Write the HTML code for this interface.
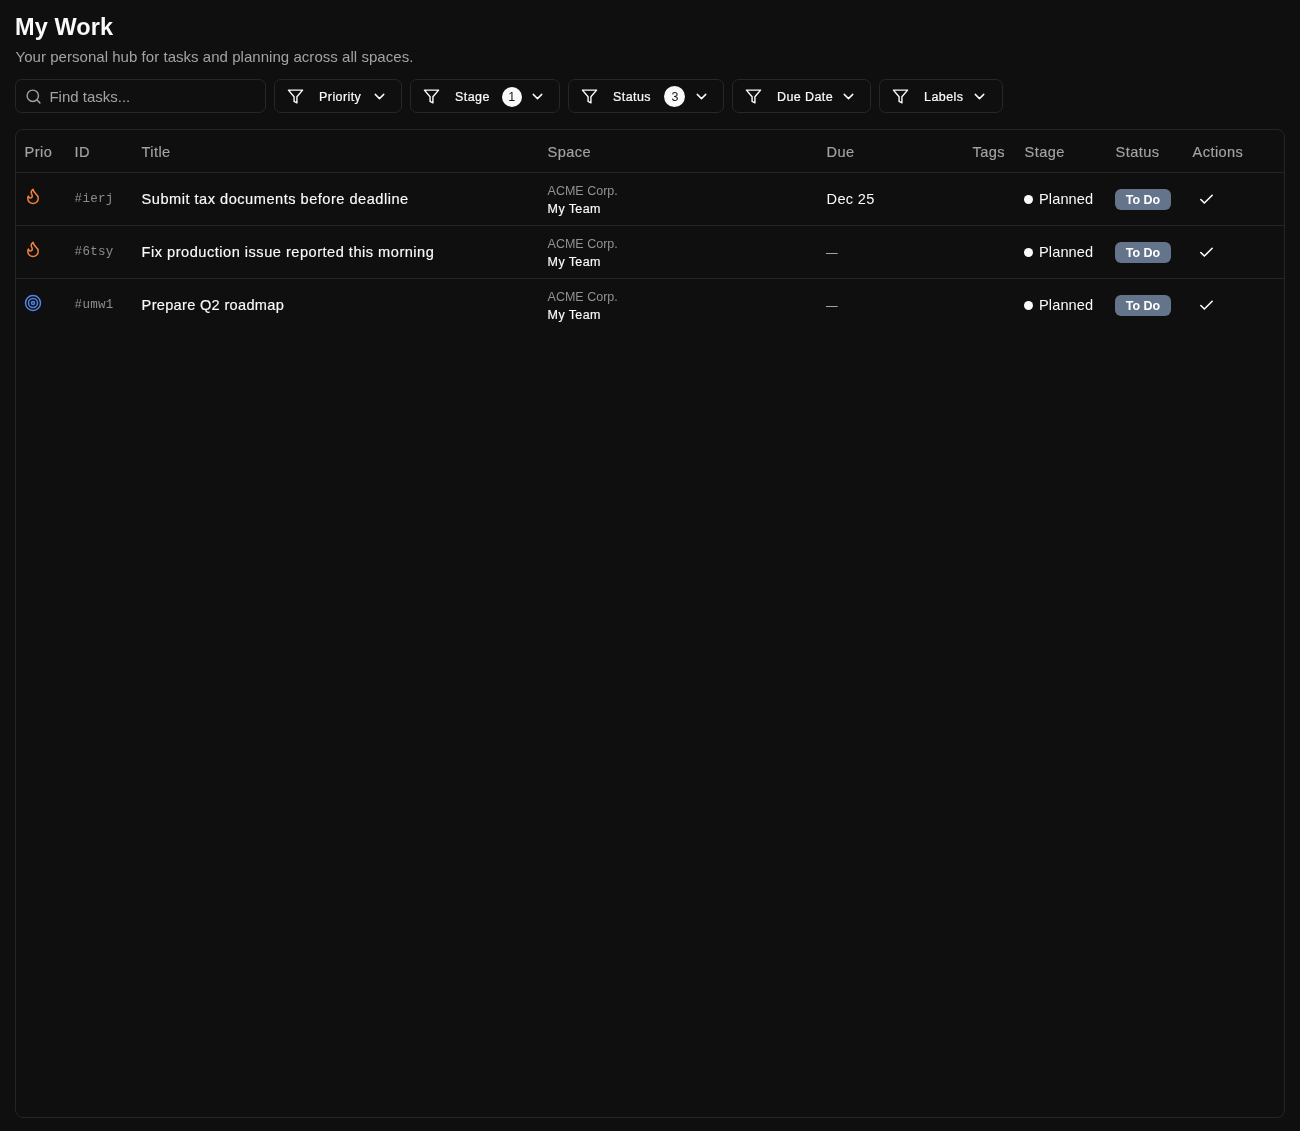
<!DOCTYPE html>
<html lang="en">
<head>
<meta charset="utf-8">
<title>My Work</title>
<style>
*{box-sizing:border-box;margin:0;padding:0}
html,body{width:1300px;height:1131px;background:#0f0f0f;overflow:hidden}
body{font-family:"Liberation Sans",Arial,sans-serif;color:#fafafa;position:relative}
.root{position:absolute;left:0;top:0;width:1300px;height:1131px;will-change:transform}
h1{position:absolute;left:15px;top:11px;font-size:23.5px;line-height:32px;font-weight:700;letter-spacing:.1px;white-space:nowrap}
.sub{position:absolute;left:15.5px;top:47px;font-size:15px;line-height:20px;color:#a3a3a3;white-space:nowrap;letter-spacing:.04px}
.filters{position:absolute;left:0;top:79px;height:34px;width:1300px}
.search{position:absolute;left:15px;top:0;width:251px;height:34px;border:1px solid #272727;border-radius:7px;display:flex;align-items:center;padding-left:9.4px;color:#a3a3a3;font-size:15px}
.search svg{width:17px;height:17px;margin-right:7px;flex:none}
.fbtn{position:absolute;top:0;height:34px;border:1px solid #272727;border-radius:7px;display:flex;align-items:center;padding:0 13.2px 0 12.2px;font-size:12.5px;color:#fafafa;white-space:nowrap}
.fbtn svg{width:17px;height:17px;flex:none}
.fbtn .fi{margin-right:14.9px}
.fbtn .ch{margin-left:auto}
.med{-webkit-text-stroke:.16px currentColor}
.fbtn .med{letter-spacing:.4px;position:relative;top:.5px;-webkit-text-stroke:.22px currentColor}
.cnt{display:inline-flex;width:20px;height:20px;border-radius:50%;background:#fafafa;color:#171717;font-size:12.5px;font-weight:400;align-items:center;justify-content:center;margin-left:12px;position:relative;top:.5px}
.card{position:absolute;left:15px;top:129px;width:1270px;height:989px;border:1px solid #252525;border-radius:8px;overflow:hidden}
table{border-collapse:collapse;table-layout:fixed;width:1268px}
th{height:42px;text-align:left;font-weight:400;font-size:14.6px;color:#a3a3a3;padding:3px 8px 0 8.6px;vertical-align:middle;white-space:nowrap;letter-spacing:.4px}
td{height:53px;padding:1px 8px 0;vertical-align:middle;font-size:14.6px;white-space:nowrap}
tr{border-bottom:1px solid #252525}
tbody tr:last-child{border-bottom:none}
.id{font-family:"Liberation Mono","DejaVu Sans Mono",monospace;font-size:12.5px;color:#8e8e8e;letter-spacing:.3px}
td.title,td.id,td.due{padding-left:8.6px}
.sp2{padding-left:.6px}
.title{font-weight:400;color:#fafafa;letter-spacing:.5px}
.sp1{font-size:12.5px;line-height:18px;color:#919191;padding-top:2px;padding-left:.6px}
.sp2{font-size:12.5px;line-height:19px;color:#fafafa;letter-spacing:.4px}
.dash{color:#a3a3a3}
.dash span{display:inline-block;transform:scaleX(.8);transform-origin:left center}
.stage{display:flex;align-items:center;letter-spacing:.1px}
.dot{width:9px;height:9px;border-radius:50%;background:#fafafa;margin-right:6px}
.badge{display:inline-flex;align-items:center;justify-content:center;width:56px;height:21px;border-radius:6px;background:#64748b;color:#fff;font-size:12.5px;font-weight:700;position:relative;top:.5px}
.act{width:28px;height:28px;display:flex;align-items:center;justify-content:center}
.act svg{width:17px;height:17px}
.pi{width:18px;height:18px;display:block;position:relative;top:-3px}
</style>
</head>
<body>
<div class="root">
<h1>My Work</h1>
<div class="sub">Your personal hub for tasks and planning across all spaces.</div>
<div class="filters">
  <div class="search"><svg viewBox="0 0 24 24" fill="none" stroke="#a3a3a3" stroke-width="2" stroke-linecap="round" stroke-linejoin="round"><circle cx="11" cy="11" r="8"/><path d="m21 21-4.3-4.3"/></svg><span>Find tasks...</span></div>
  <div class="fbtn" style="left:274px;width:128px"><svg class="fi" viewBox="0 0 24 24" fill="none" stroke="#fafafa" stroke-width="2" stroke-linecap="round" stroke-linejoin="round"><polygon points="22 3 2 3 10 12.46 10 19 14 21 14 12.46 22 3"/></svg><span class="med">Priority</span><svg class="ch" viewBox="0 0 24 24" fill="none" stroke="#fafafa" stroke-width="2" stroke-linecap="round" stroke-linejoin="round"><path d="m6 9 6 6 6-6"/></svg></div>
  <div class="fbtn" style="left:410px;width:150px"><svg class="fi" viewBox="0 0 24 24" fill="none" stroke="#fafafa" stroke-width="2" stroke-linecap="round" stroke-linejoin="round"><polygon points="22 3 2 3 10 12.46 10 19 14 21 14 12.46 22 3"/></svg><span class="med">Stage</span><span class="cnt">1</span><svg class="ch" viewBox="0 0 24 24" fill="none" stroke="#fafafa" stroke-width="2" stroke-linecap="round" stroke-linejoin="round"><path d="m6 9 6 6 6-6"/></svg></div>
  <div class="fbtn" style="left:568px;width:156px"><svg class="fi" viewBox="0 0 24 24" fill="none" stroke="#fafafa" stroke-width="2" stroke-linecap="round" stroke-linejoin="round"><polygon points="22 3 2 3 10 12.46 10 19 14 21 14 12.46 22 3"/></svg><span class="med">Status</span><span class="cnt" style="margin-left:13.5px;width:21px;height:21px">3</span><svg class="ch" viewBox="0 0 24 24" fill="none" stroke="#fafafa" stroke-width="2" stroke-linecap="round" stroke-linejoin="round"><path d="m6 9 6 6 6-6"/></svg></div>
  <div class="fbtn" style="left:732px;width:139px"><svg class="fi" viewBox="0 0 24 24" fill="none" stroke="#fafafa" stroke-width="2" stroke-linecap="round" stroke-linejoin="round"><polygon points="22 3 2 3 10 12.46 10 19 14 21 14 12.46 22 3"/></svg><span class="med">Due Date</span><svg class="ch" viewBox="0 0 24 24" fill="none" stroke="#fafafa" stroke-width="2" stroke-linecap="round" stroke-linejoin="round"><path d="m6 9 6 6 6-6"/></svg></div>
  <div class="fbtn" style="left:879px;width:123.5px"><svg class="fi" viewBox="0 0 24 24" fill="none" stroke="#fafafa" stroke-width="2" stroke-linecap="round" stroke-linejoin="round"><polygon points="22 3 2 3 10 12.46 10 19 14 21 14 12.46 22 3"/></svg><span class="med">Labels</span><svg class="ch" viewBox="0 0 24 24" fill="none" stroke="#fafafa" stroke-width="2" stroke-linecap="round" stroke-linejoin="round"><path d="m6 9 6 6 6-6"/></svg></div>
</div>
<div class="card">
<table>
<colgroup><col style="width:50px"><col style="width:67px"><col style="width:406px"><col style="width:279px"><col style="width:146px"><col style="width:52px"><col style="width:91px"><col style="width:77px"><col></colgroup>
<thead><tr><th class="med">Prio</th><th class="med">ID</th><th class="med">Title</th><th class="med">Space</th><th class="med">Due</th><th class="med">Tags</th><th class="med">Stage</th><th class="med">Status</th><th class="med">Actions</th></tr></thead>
<tbody>
<tr>
<td><svg class="pi" viewBox="0 0 24 24" fill="none" stroke="#f0803c" stroke-width="2" stroke-linecap="round" stroke-linejoin="round"><path d="M8.5 14.5A2.5 2.5 0 0 0 11 12c0-1.38-.5-2-1-3-1.072-2.143-.224-4.054 2-6 .5 2.500 2 4.900 4 6.500 2 1.600 3 3.500 3 5.500a7 7 0 1 1-14 0c0-1.153.433-2.294 1-3a2.500 2.500 0 0 0 2.500 2.500z"/></svg></td>
<td class="id">#ierj</td><td class="title med">Submit tax documents before deadline</td>
<td><div class="sp1">ACME Corp.</div><div class="sp2 med">My Team</div></td>
<td class="due" style="letter-spacing:.3px">Dec 25</td><td></td>
<td><div class="stage"><span class="dot"></span>Planned</div></td>
<td><span class="badge">To Do</span></td>
<td><div class="act"><svg viewBox="0 0 24 24" fill="none" stroke="#fafafa" stroke-width="2.3" stroke-linecap="round" stroke-linejoin="round"><path d="M20 6 9 17l-5-5"/></svg></div></td>
</tr>
<tr>
<td><svg class="pi" viewBox="0 0 24 24" fill="none" stroke="#f0803c" stroke-width="2" stroke-linecap="round" stroke-linejoin="round"><path d="M8.5 14.5A2.5 2.5 0 0 0 11 12c0-1.38-.5-2-1-3-1.072-2.143-.224-4.054 2-6 .5 2.500 2 4.900 4 6.500 2 1.600 3 3.500 3 5.500a7 7 0 1 1-14 0c0-1.153.433-2.294 1-3a2.500 2.500 0 0 0 2.500 2.500z"/></svg></td>
<td class="id">#6tsy</td><td class="title med">Fix production issue reported this morning</td>
<td><div class="sp1">ACME Corp.</div><div class="sp2 med">My Team</div></td>
<td class="dash"><span>—</span></td><td></td>
<td><div class="stage"><span class="dot"></span>Planned</div></td>
<td><span class="badge">To Do</span></td>
<td><div class="act"><svg viewBox="0 0 24 24" fill="none" stroke="#fafafa" stroke-width="2.3" stroke-linecap="round" stroke-linejoin="round"><path d="M20 6 9 17l-5-5"/></svg></div></td>
</tr>
<tr>
<td><svg class="pi" style="top:-2.2px" viewBox="0 0 24 24" fill="none" stroke="#5283e6" stroke-width="2" stroke-linecap="round" stroke-linejoin="round"><circle cx="12" cy="12" r="10"/><circle cx="12" cy="12" r="6"/><circle cx="12" cy="12" r="2"/></svg></td>
<td class="id">#umw1</td><td class="title med" style="letter-spacing:.3px">Prepare Q2 roadmap</td>
<td><div class="sp1">ACME Corp.</div><div class="sp2 med">My Team</div></td>
<td class="dash"><span>—</span></td><td></td>
<td><div class="stage"><span class="dot"></span>Planned</div></td>
<td><span class="badge">To Do</span></td>
<td><div class="act"><svg viewBox="0 0 24 24" fill="none" stroke="#fafafa" stroke-width="2.3" stroke-linecap="round" stroke-linejoin="round"><path d="M20 6 9 17l-5-5"/></svg></div></td>
</tr>
</tbody>
</table>
</div>
</div>
</body>
</html>
